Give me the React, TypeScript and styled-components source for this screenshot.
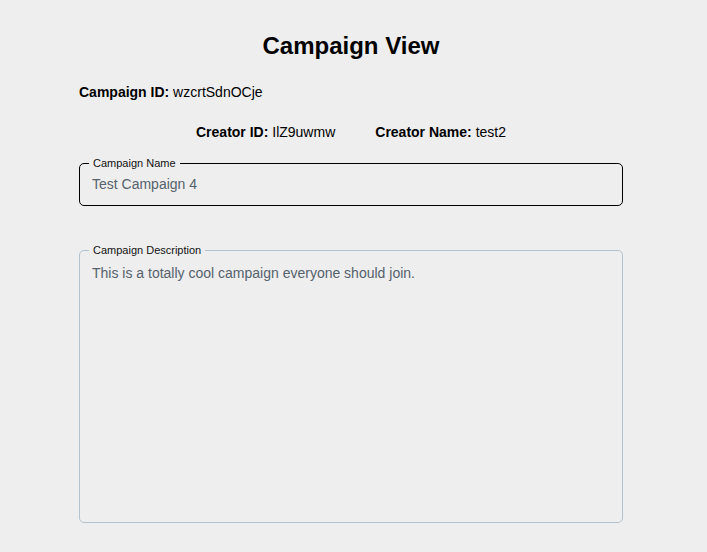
import React from "react";
import styled, { createGlobalStyle } from "styled-components";

const Global = createGlobalStyle`
  html, body { margin: 0; padding: 0; background: #eeeeee; }
  body { font-family: "Liberation Sans", Arial, sans-serif; color: #000; }
`;

const Page = styled.div`
  width: 544px;
  padding: 32px 0 0 79px;
  display: flex;
  flex-direction: column;
`;

const Title = styled.h1`
  margin: 0;
  font-size: 24px;
  font-weight: 700;
  text-align: center;
  line-height: 28px;
`;

const InfoRow = styled.div<{ $center?: boolean; $top: number }>`
  display: flex;
  justify-content: ${(p) => (p.$center ? "center" : "flex-start")};
  gap: 40px;
  margin-top: ${(p) => p.$top}px;
  font-size: 14px;
  line-height: 16px;
`;

const Info = styled.span`
  b { font-weight: 700; }
`;

const Fieldset = styled.fieldset<{ $active?: boolean; $top: number; $h: number }>`
  margin: ${(p) => p.$top}px 0 0 0;
  padding: 0 12px;
  height: ${(p) => p.$h}px;
  box-sizing: border-box;
  border: ${(p) => (p.$active ? "1.5px solid #000" : "1px solid #b3c2cc")};
  border-radius: 5px;
  min-width: 0;
`;

const Legend = styled.legend`
  font-size: 11px;
  line-height: 13px;
  padding: 0 4px;
  margin-left: -3px;
  color: #111;
`;

const Input = styled.input`
  display: block;
  width: 100%;
  border: none;
  background: transparent;
  outline: none;
  padding: 0;
  margin-top: 5px;
  font-family: "Liberation Sans", Arial, sans-serif;
  font-size: 14px;
  line-height: 18px;
  color: #55626d;
`;

const TextArea = styled.textarea`
  display: block;
  width: 100%;
  height: 236px;
  border: none;
  background: transparent;
  outline: none;
  resize: none;
  padding: 0;
  margin-top: 7px;
  font-family: "Liberation Sans", Arial, sans-serif;
  font-size: 14px;
  line-height: 18px;
  color: #55626d;
`;

export default function App() {
  return (
    <>
      <Global />
      <Page>
        <Title>Campaign View</Title>
        <InfoRow $top={24}>
          <Info>
            <b>Campaign ID:</b> wzcrtSdnOCje
          </Info>
        </InfoRow>
        <InfoRow $top={24} $center>
          <Info>
            <b>Creator ID:</b> IlZ9uwmw
          </Info>
          <Info>
            <b>Creator Name:</b> test2
          </Info>
        </InfoRow>
        <Fieldset $active $top={17} $h={49}>
          <Legend>Campaign Name</Legend>
          <Input readOnly value="Test Campaign 4" />
        </Fieldset>
        <Fieldset $top={38} $h={279}>
          <Legend>Campaign Description</Legend>
          <TextArea readOnly value="This is a totally cool campaign everyone should join." />
        </Fieldset>
      </Page>
    </>
  );
}
